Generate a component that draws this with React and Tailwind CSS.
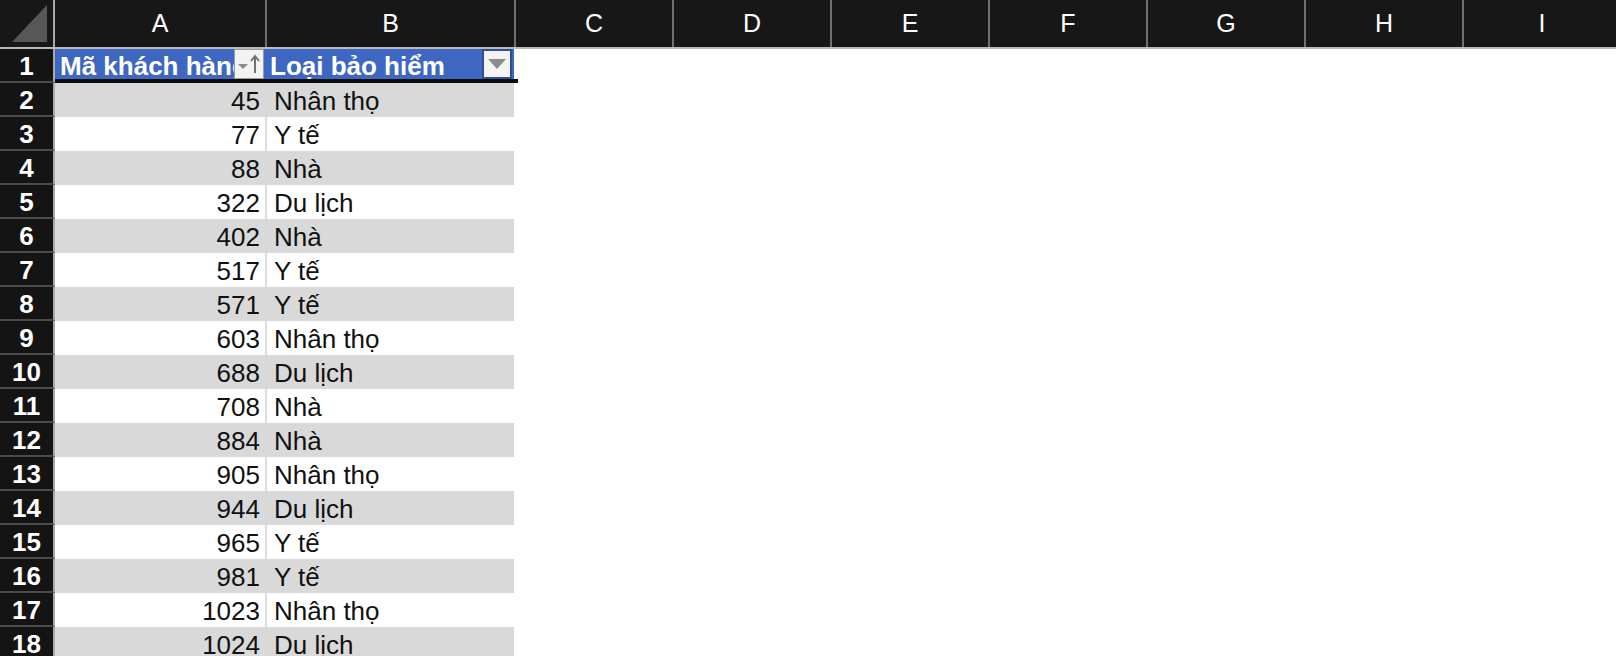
import React from "react";

const rows = [
  [45, "Nhân thọ"],
  [77, "Y tế"],
  [88, "Nhà"],
  [322, "Du lịch"],
  [402, "Nhà"],
  [517, "Y tế"],
  [571, "Y tế"],
  [603, "Nhân thọ"],
  [688, "Du lịch"],
  [708, "Nhà"],
  [884, "Nhà"],
  [905, "Nhân thọ"],
  [944, "Du lịch"],
  [965, "Y tế"],
  [981, "Y tế"],
  [1023, "Nhân thọ"],
  [1024, "Du lịch"],
];

const cols = ["C", "D", "E", "F", "G", "H", "I"];

function RowHead({ n }) {
  return (
    <div className="w-[55px] h-[34px] shrink-0 bg-[#141414] border-r-2 border-b-2 border-r-[#a9a9a9] border-b-[#4c4c4c] flex items-center justify-center pt-[2px] text-white font-bold text-[26px] leading-none">
      {n}
    </div>
  );
}

export default function App() {
  return (
    <div className="w-[1616px] h-[656px] overflow-hidden bg-white font-['Liberation_Sans',Arial,sans-serif]">
      {/* Column header */}
      <div className="flex h-[49px] bg-[#171717] border-b-2 border-[#b9b9b9]">
        <div className="w-[55px] shrink-0 border-r-2 border-[#a9a9a9] flex items-end justify-end pr-[5px] pb-[4px]">
          <svg width="36" height="38" viewBox="0 0 36 38">
            <polygon points="35,0 0,37 35,37" fill="#575757" />
          </svg>
        </div>
        <div className="w-[212px] shrink-0 border-r-2 border-[#6f6f6f] flex items-center justify-center text-white text-[25px]">
          A
        </div>
        <div className="w-[249px] shrink-0 border-r-2 border-[#6f6f6f] flex items-center justify-center text-white text-[25px]">
          B
        </div>
        {cols.map((c) => (
          <div
            key={c}
            className="w-[158px] shrink-0 border-r-2 border-[#6f6f6f] flex items-center justify-center text-white text-[25px]"
          >
            {c}
          </div>
        ))}
      </div>

      {/* Row 1: table header */}
      <div className="flex">
        <RowHead n={1} />
        <div className="flex flex-col">
          <div className="flex h-[30px] bg-[#3d67c1] w-[459px]">
            <div className="w-[179px] shrink-0 overflow-hidden whitespace-nowrap pl-[5px] pt-[3px] flex items-center text-white font-bold text-[26px] leading-none">
              Mã khách hàng
            </div>
            <div className="w-[30px] shrink-0 bg-[#f2f2f2] border border-[#9a9a9a] flex items-center justify-center gap-[2px]">
              <svg width="26" height="22" viewBox="0 0 26 22">
                <polygon points="2,11 12,11 7,16" fill="#8a8a8a" />
                <path d="M19 20 V4 M15 8 L19 3 L23 8" stroke="#707070" strokeWidth="2" fill="none" />
              </svg>
            </div>
            <div className="w-[218px] shrink-0 overflow-hidden whitespace-nowrap pl-[6px] pt-[3px] flex items-center text-white font-bold text-[26px] leading-none">
              Loại bảo hiểm
            </div>
            <div className="w-[30px] shrink-0 bg-[#f4f4f4] border-2 border-[#2d4f99] flex items-center justify-center">
              <svg width="18" height="10" viewBox="0 0 18 10">
                <polygon points="0,0 18,0 9,10" fill="#8c8c8c" />
              </svg>
            </div>
          </div>
          <div className="h-[4px] w-[463px] bg-[#0c0c0c]" />
        </div>
      </div>

      {rows.map(([id, type], i) => {
        const gray = i % 2 === 0;
        return (
          <div key={id} className="flex">
            <RowHead n={i + 2} />
            <div
              className={`flex h-[34px] w-[459px] text-[26px] text-[#111] leading-none ${
                gray ? "bg-[#d9d9d9]" : "bg-white"
              }`}
            >
              <div className="w-[210px] shrink-0 flex items-center justify-end pr-[5px] pt-[2px]">{id}</div>
              <div className={`w-[2px] shrink-0 ${gray ? "bg-[#d9d9d9]" : "bg-[#dcdcdc]"}`} />
              <div className="flex-1 flex items-center pl-[7px] pt-[2px]">{type}</div>
            </div>
          </div>
        );
      })}
    </div>
  );
}
